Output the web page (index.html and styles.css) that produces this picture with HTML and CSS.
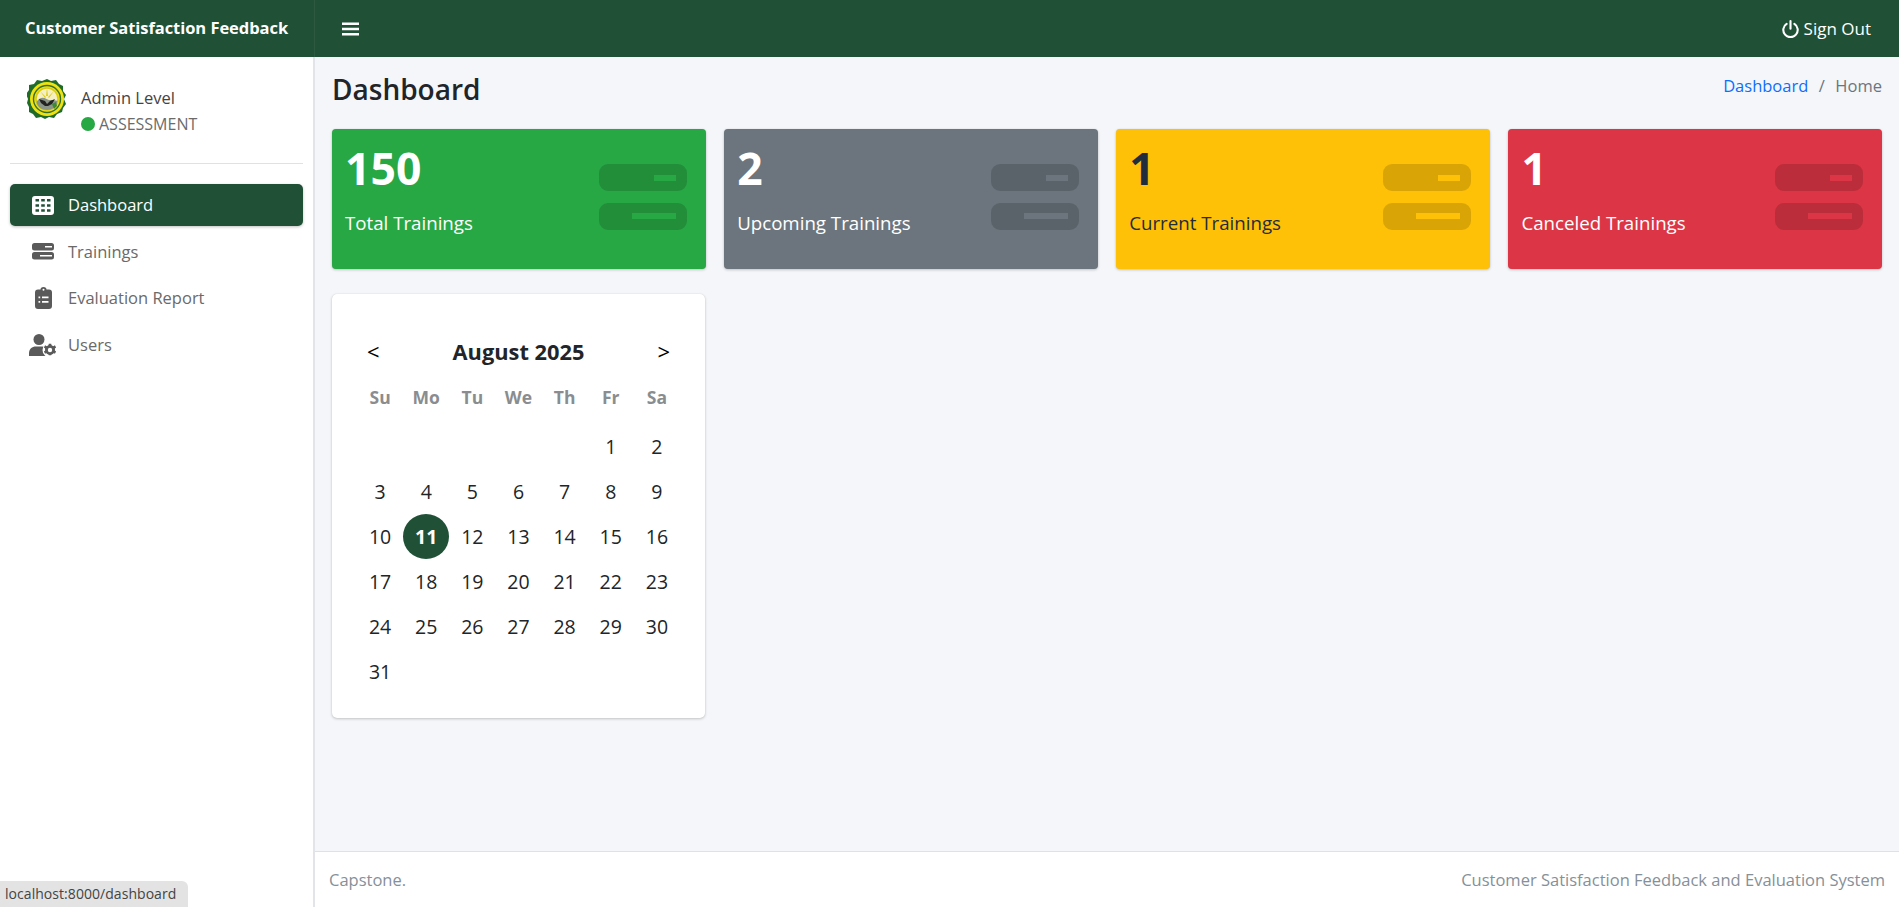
FILE: index.html
```html
<!DOCTYPE html>
<html lang="en">
<head>
<meta charset="utf-8">
<title>Dashboard</title>
<link rel="stylesheet" href="styles.css">
</head>
<body>
<div class="app">
  <header class="topbar">
    <div class="brand">Customer Satisfaction Feedback</div>
    <div class="topbar-main">
      <svg class="burger" viewBox="0 0 17 14"><path d="M0 .5h17V3H0zM0 5.800h17v2.500H0zM0 11h17v2.500H0z" fill="#fff"/></svg>
      <a class="signout">
        <svg class="power" viewBox="0 0 17 18"><path d="M4.600 3.900a7.200 7.200 0 1 0 7.800 0" fill="none" stroke="#fff" stroke-width="2.100" stroke-linecap="round"/><path d="M8.500 1.100v7.600" fill="none" stroke="#fff" stroke-width="2.100" stroke-linecap="round"/></svg>
        <span>Sign Out</span>
      </a>
    </div>
  </header>
  <aside class="sidebar">
    <div class="user">
      <svg class="logo" viewBox="0 0 40 42">
        <path d="M20 1l4 2 5-1 3 4 4 2 0 5 3 4-2 4 2 5-3 4-1 4-5 2-3 4-5-1-4 2-4-2-5 1-3-4-4-2 0-5-2-4 1-4-2-5 3-4 0-5 5-1 3-4 5 1z" fill="#1f6b2a"/>
        <circle cx="20" cy="21" r="17" fill="#f0e210"/>
        <circle cx="20" cy="21" r="13.500" fill="none" stroke="#37702c" stroke-width="1.400"/>
        <circle cx="20" cy="21" r="11" fill="#f5f0c4" stroke="#d9cc10" stroke-width="1.500"/>
        <path d="M9.500 24c3-5 7-5 10-3s7 0 11 2c-1 6-5 9-10.500 9S10.500 29 9.500 24z" fill="#8a9487"/>
        <path d="M12 21l6 2 2 3 3-3 5-2-3 5-4 2h-3l-4-3z" fill="#222"/>
        <path d="M20 10l1 8-2 0zM13 13l6 6-1 1zM27 13l-6 6 1 1z" fill="#e0cc10"/>
        <path d="M25 26l4-2 1 4-3 3z" fill="#3b8a37"/>
      </svg>
      <div class="user-info">
        <div class="user-name">Admin Level</div>
        <div class="user-status"><span class="dot"></span>ASSESSMENT</div>
      </div>
    </div>
    <nav class="nav">
      <a class="nav-item active">
        <span class="nav-icon"><svg width="22" height="19" viewBox="0 0 22 19"><path fill="#fff" fill-rule="evenodd" d="M3 0h16a3 3 0 0 1 3 3v13a3 3 0 0 1-3 3H3a3 3 0 0 1-3-3V3a3 3 0 0 1 3-3zM3.500 3v2.500h3.500V3zM9.200 3v2.500h3.600V3zM15 3v2.500h3.500V3zM3.500 8.200v2.500h3.500V8.200zM9.200 8.200v2.500h3.600V8.200zM15 8.200v2.500h3.500V8.200zM3.500 13.300v2.500h3.500v-2.500zM9.200 13.300v2.500h3.600v-2.500zM15 13.300v2.500h3.500v-2.500z"/></svg></span>
        <span>Dashboard</span>
      </a>
      <a class="nav-item">
        <span class="nav-icon"><svg width="22" height="17" viewBox="0 0 22 17"><path fill="#5a5a5a" fill-rule="evenodd" d="M2.500 0h17A2.500 2.500 0 0 1 22 2.500v2.500a2.500 2.500 0 0 1-2.500 2.500h-17A2.500 2.500 0 0 1 0 5V2.500A2.500 2.500 0 0 1 2.500 0zM13 3v1.500h7V3zM2.500 9h17a2.500 2.500 0 0 1 2.500 2.500V14a2.500 2.500 0 0 1-2.500 2.500h-17A2.500 2.500 0 0 1 0 14v-2.500A2.500 2.500 0 0 1 2.500 9zM8 12v1.500h12V12z"/></svg></span>
        <span>Trainings</span>
      </a>
      <a class="nav-item">
        <span class="nav-icon"><svg width="17" height="22" viewBox="0 0 17 22"><path fill="#5a5a5a" fill-rule="evenodd" d="M5.500 2.500a3 2.500 0 0 1 6 0H14a3 3 0 0 1 3 3V19a3 3 0 0 1-3 3H3a3 3 0 0 1-3-3V5.500a3 3 0 0 1 3-3zM7.500 2.800a1 1 0 1 0 2 0 1 1 0 0 0-2 0zM3.500 9.500v1.700h1.700V9.500zM7 9.500v1.700h6.500V9.500zM3.500 14v1.700h1.700V14zM7 14v1.700h6.500V14z"/></svg></span>
        <span>Evaluation Report</span>
      </a>
      <a class="nav-item">
        <span class="nav-icon"><svg width="28" height="22" viewBox="0 0 28 22"><g fill="#5a5a5a"><circle cx="10" cy="5.500" r="5.500"/><path d="M0 22v-2.500C0 15 3 12.500 7 12.500h6c1.300 0 2.500.3 3.500.8-.8 2.500-1 5 .5 8.700z"/></g><circle cx="21" cy="16" r="7.500" fill="#fff"/><g fill="#5a5a5a"><circle cx="21" cy="16" r="4.800"/><path d="M19.800 9.800h2.400l.4 1.800 1.700.7 1.600-1 1.200 2.100-1.300 1.200v1.800l1.300 1.200-1.200 2.100-1.600-1-1.700.7-.4 1.800h-2.400l-.4-1.800-1.700-.7-1.600 1-1.200-2.100 1.300-1.200v-1.800l-1.300-1.200 1.200-2.100 1.600 1 1.700-.7z"/></g><circle cx="21" cy="16" r="2.200" fill="#fff"/></svg></span>
        <span>Users</span>
      </a>
    </nav>
  </aside>
  <main class="content">
    <div class="page-head">
      <h1 class="page-title">Dashboard</h1>
      <ol class="crumbs"><li class="crumb-link">Dashboard</li><li class="crumb-sep">/</li><li class="crumb-current">Home</li></ol>
    </div>
    <section class="cards">
      <div class="card card-green"><div class="card-text"><div class="num">150</div><div class="label">Total Trainings</div></div><svg class="card-icon" viewBox="0 0 88 66"><path fill-rule="evenodd" d="M9 0h70a9 9 0 0 1 9 9v9a9 9 0 0 1-9 9H9a9 9 0 0 1-9-9V9a9 9 0 0 1 9-9zM55 11v6h22v-6zM9 39h70a9 9 0 0 1 9 9v9a9 9 0 0 1-9 9H9a9 9 0 0 1-9-9v-9a9 9 0 0 1 9-9zM33 49v6h44v-6z"/></svg></div>
      <div class="card card-gray"><div class="card-text"><div class="num">2</div><div class="label">Upcoming Trainings</div></div><svg class="card-icon" viewBox="0 0 88 66"><path fill-rule="evenodd" d="M9 0h70a9 9 0 0 1 9 9v9a9 9 0 0 1-9 9H9a9 9 0 0 1-9-9V9a9 9 0 0 1 9-9zM55 11v6h22v-6zM9 39h70a9 9 0 0 1 9 9v9a9 9 0 0 1-9 9H9a9 9 0 0 1-9-9v-9a9 9 0 0 1 9-9zM33 49v6h44v-6z"/></svg></div>
      <div class="card card-yellow"><div class="card-text"><div class="num">1</div><div class="label">Current Trainings</div></div><svg class="card-icon" viewBox="0 0 88 66"><path fill-rule="evenodd" d="M9 0h70a9 9 0 0 1 9 9v9a9 9 0 0 1-9 9H9a9 9 0 0 1-9-9V9a9 9 0 0 1 9-9zM55 11v6h22v-6zM9 39h70a9 9 0 0 1 9 9v9a9 9 0 0 1-9 9H9a9 9 0 0 1-9-9v-9a9 9 0 0 1 9-9zM33 49v6h44v-6z"/></svg></div>
      <div class="card card-red"><div class="card-text"><div class="num">1</div><div class="label">Canceled Trainings</div></div><svg class="card-icon" viewBox="0 0 88 66"><path fill-rule="evenodd" d="M9 0h70a9 9 0 0 1 9 9v9a9 9 0 0 1-9 9H9a9 9 0 0 1-9-9V9a9 9 0 0 1 9-9zM55 11v6h22v-6zM9 39h70a9 9 0 0 1 9 9v9a9 9 0 0 1-9 9H9a9 9 0 0 1-9-9v-9a9 9 0 0 1 9-9zM33 49v6h44v-6z"/></svg></div>
    </section>
    <section class="calendar">
      <div class="cal-head"><span class="cal-nav">&lt;</span><span class="cal-title">August 2025</span><span class="cal-nav">&gt;</span></div>
      <div class="cal-grid">
        <div class="dow">Su</div><div class="dow">Mo</div><div class="dow">Tu</div><div class="dow">We</div><div class="dow">Th</div><div class="dow">Fr</div><div class="dow">Sa</div>
        <div></div><div></div><div></div><div></div><div></div><div class="day">1</div><div class="day">2</div>
        <div class="day">3</div><div class="day">4</div><div class="day">5</div><div class="day">6</div><div class="day">7</div><div class="day">8</div><div class="day">9</div>
        <div class="day">10</div><div class="day today">11</div><div class="day">12</div><div class="day">13</div><div class="day">14</div><div class="day">15</div><div class="day">16</div>
        <div class="day">17</div><div class="day">18</div><div class="day">19</div><div class="day">20</div><div class="day">21</div><div class="day">22</div><div class="day">23</div>
        <div class="day">24</div><div class="day">25</div><div class="day">26</div><div class="day">27</div><div class="day">28</div><div class="day">29</div><div class="day">30</div>
        <div class="day">31</div>
      </div>
    </section>
  </main>
  <footer class="footer"><span>Capstone.</span><span>Customer Satisfaction Feedback and Evaluation System</span></footer>
</div>
<div class="status">localhost:8000/dashboard</div>
</body>
</html>
```
FILE: styles.css
```css
* { box-sizing: border-box; }
html, body { margin: 0; height: 100%; overflow: hidden; }
body { font-family: "Open Sans", "Noto Sans", sans-serif; font-size: 16.5px; color: #212529; background: #fff; }
.app { display: grid; grid-template-columns: 315px 1fr; grid-template-rows: 57px 1fr 56px; height: 907px; }
.topbar { grid-column: 1 / 3; display: flex; background: #205137; color: #fff; }
.brand { width: 315px; border-right: 1px solid #2b5a41; font-weight: 700; font-size: 16.5px; letter-spacing: -0.05px; line-height: 56px; padding-left: 25px; white-space: nowrap; }
.topbar-main { flex: 1; display: flex; align-items: center; justify-content: space-between; padding: 0 28px 0 27px; }
.burger { width: 17px; height: 14px; }
.signout { display: flex; align-items: center; gap: 5px; font-size: 17px; letter-spacing: 0; }
.power { width: 17px; height: 18px; }
.sidebar { grid-row: 2 / 4; border-right: 2px solid #e3e4e9; background: #fff; padding: 0 10px; }
.user { display: flex; height: 107px; padding: 21px 17px 0 17px; border-bottom: 1px solid #dee2e6; }
.logo { width: 40px; height: 42px; flex: none; margin-right: 14px; }
.user-name { line-height: 24px; color: #444; margin-top: 8px; }
.user-status { font-size: 16px; line-height: 24px; color: #6b6b6b; margin-top: 2px; display: flex; align-items: center; white-space: nowrap; }
.dot { width: 14px; height: 14px; border-radius: 50%; background: #28a745; margin-right: 4px; flex: none; }
.nav { margin-top: 20px; display: flex; flex-direction: column; gap: 4.500px; }
.nav-item { height: 42px; display: flex; align-items: center; border-radius: 5px; color: #6a6a6a; line-height: 40px; }
.nav-item.active { background: #205137; color: #fff; box-shadow: 0 1px 3px rgba(0,0,0,.25); }
.nav-icon { width: 58px; display: flex; justify-content: center; padding-left: 8px; flex: none; }
.content { background: #f4f6f9; padding: 0 17px; min-width: 0; }
.page-head { display: flex; justify-content: space-between; height: 72px; align-items: flex-start; padding-top: 15px; }
.page-title { margin: 0; font-size: 28px; font-weight: 600; line-height: 34px; color: #212529; }
.crumbs { display: flex; list-style: none; margin: 0; padding: 2px 0 0; line-height: 24px; }
.crumb-link { color: #0d6efd; }
.crumb-sep { color: #6c757d; margin: 0 10.500px; }
.crumb-current { color: #6c757d; }
.cards { display: grid; grid-template-columns: repeat(4, 1fr); gap: 18.500px; }
.card { height: 140px; border-radius: 4px; box-shadow: 0 0 1px rgba(0,0,0,.125), 0 1px 3px rgba(0,0,0,.2); display: flex; justify-content: space-between; padding: 10px 19px 0 13px; }
.card-green { background: #28a745; color: #fff; }
.card-gray { background: #6c757d; color: #fff; }
.card-yellow { background: #ffc107; color: #1f2d3d; }
.card-red { background: #dc3545; color: #fff; }
.num { font-size: 44.500px; font-weight: 700; line-height: 58px; }
.label { font-size: 18.700px; line-height: 28px; margin-top: 12px; }
.card-icon { width: 88px; height: 66px; margin-top: 25px; fill: rgba(0,0,0,.15); flex: none; }
.calendar { width: 373px; height: 424px; margin-top: 25px; background: #fff; border-radius: 5px; box-shadow: 0 0 1px rgba(0,0,0,.125), 0 1px 3px rgba(0,0,0,.2); padding: 41px 25px 0 25px; }
.cal-head { display: flex; justify-content: space-between; align-items: center; height: 32px; padding: 0 10px; }
.cal-nav { font-size: 22px; color: #000; line-height: 32px; }
.cal-title { font-size: 21.800px; font-weight: 700; color: #212529; }
.cal-grid { display: grid; grid-template-columns: repeat(7, 46.143px); grid-template-rows: 50px; grid-auto-rows: 45px; margin-top: 7px; text-align: center; }
.dow { font-weight: 700; color: #8a8d90; font-size: 17.500px; display: flex; align-items: center; justify-content: center; height: 45px; }
.day { display: flex; align-items: center; justify-content: center; font-size: 19.500px; color: #212529; }
.today { background: #205137; color: #fff; font-weight: 700; border-radius: 50%; }
.footer { grid-column: 2; display: flex; justify-content: space-between; align-items: center; background: #fff; border-top: 1px solid #dee2e6; color: #869099; padding: 0 14px; }
.status { position: fixed; left: 0; bottom: 0; height: 26px; width: 188px; background: #e3e3e3; border-top-right-radius: 6px; color: #444; font-size: 14px; letter-spacing: 0.05px; line-height: 26px; padding-left: 5px; white-space: nowrap; }
```
